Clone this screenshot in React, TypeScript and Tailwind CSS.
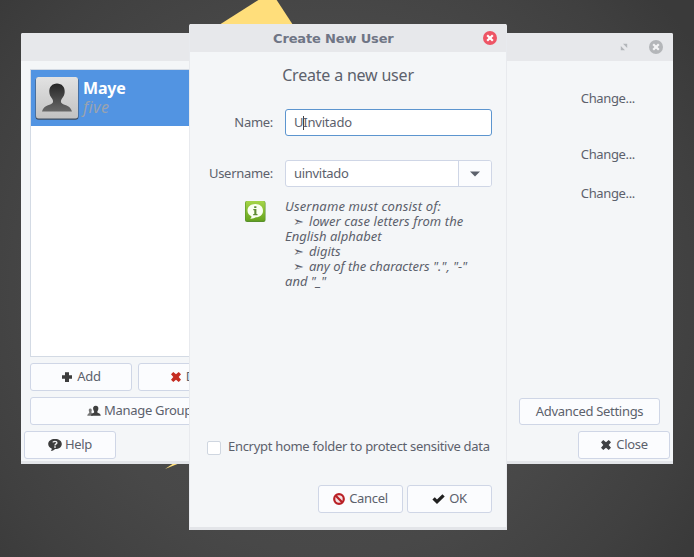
import type { ReactNode } from "react";

const ui = "font-['Noto_Sans','Liberation_Sans',sans-serif]";

function Button({ children, className }: { children: ReactNode; className: string }) {
  return (
    <button
      className={`flex shrink-0 items-center justify-center whitespace-nowrap rounded-[3px] border border-[#cfd6e6] bg-[#fbfcfe] pb-px text-[13px] leading-none tracking-[-0.3px] text-[#5c616c] ${className}`}
    >
      {children}
    </button>
  );
}

function Desktop() {
  return (
    <svg className="absolute inset-0" width="694" height="557" viewBox="0 0 694 557">
      <defs>
        <radialGradient id="desk" gradientUnits="userSpaceOnUse" cx="330" cy="290" r="440">
          <stop offset="0" stopColor="#505050" />
          <stop offset="0.6" stopColor="#484848" />
          <stop offset="0.85" stopColor="#404040" />
          <stop offset="1" stopColor="#3a3a3a" />
        </radialGradient>
      </defs>
      <rect width="694" height="557" fill="url(#desk)" />
      <path d="M219 25 L260 -1 H276 L293 25 Z" fill="#ffde7b" />
      <path d="M165 469 L174 463 H180 Z" fill="#ffe07e" />
    </svg>
  );
}

function CloseDot({ fill, stroke }: { fill: string; stroke: string }) {
  return (
    <svg width="14" height="14" viewBox="0 0 14 14">
      <circle cx="7" cy="7" r="7" fill={fill} />
      <path d="M4.2 4.2 L9.8 9.8 M9.8 4.2 L4.2 9.8" stroke={stroke} strokeWidth="2.2" />
    </svg>
  );
}

function Avatar() {
  return (
    <svg width="44" height="44" viewBox="0 0 44 44" className="shrink-0">
      <defs>
        <linearGradient id="frame" x1="0" y1="0" x2="0" y2="1">
          <stop offset="0" stopColor="#e2e2e2" />
          <stop offset="1" stopColor="#c2c2c2" />
        </linearGradient>
        <linearGradient id="person" x1="0" y1="0" x2="0" y2="1">
          <stop offset="0" stopColor="#262626" />
          <stop offset="1" stopColor="#686868" />
        </linearGradient>
      </defs>
      <rect x="0.5" y="1.5" width="43" height="42.3" rx="3" fill="#3d4b5e" />
      <rect x="1" y="1" width="42" height="41.5" rx="2.5" fill="url(#frame)" />
      <path
        d="M22 7.5 C26.8 7.5 30 11 29.7 16 C29.5 19 28.5 20.6 27 22.5 C25.6 24.5 25.3 26.5 27.4 27.7 C31 29.7 35.5 29.8 37 35.5 H7 C8.5 29.8 13 29.7 16.6 27.7 C18.7 26.5 18.4 24.5 17 22.5 C15.5 20.6 14.5 19 14.3 16 C14 11 17.2 7.5 22 7.5 Z"
        fill="url(#person)"
      />
    </svg>
  );
}

function PlusIcon() {
  return (
    <svg width="12" height="12" viewBox="0 0 12 12">
      <path d="M4 1.2 H8 V4.2 H11 V7.8 H8 V11 H4 V7.8 H1 V4.2 H4 Z" fill="#3d3d3d" />
    </svg>
  );
}

function CrossIcon({ fill }: { fill: string }) {
  return (
    <svg width="12" height="12" viewBox="0 0 12 12">
      <path
        d="M3.3 1 L6 3.2 L8.7 1 L11 3.2 L8.7 6 L11 8.8 L8.7 11 L6 8.8 L3.3 11 L1 8.8 L3.3 6 L1 3.2 Z"
        fill={fill}
      />
    </svg>
  );
}

function GroupIcon() {
  return (
    <svg width="14" height="12" viewBox="0 0 14 12">
      <path d="M3.2 3.4 C4.7 3.4 5.2 5 4.5 6.4 C4 7.5 5 7.9 5.8 8.4 V10.8 H0.3 C0.3 8.6 2.6 8.4 2.2 6.9 C1.3 5.2 1.8 3.4 3.2 3.4 Z" fill="#777" />
      <path d="M8.7 0.8 C10.9 0.8 11.9 2.5 11.2 4.7 C10.8 6 10 6.7 10.4 7.5 C11.3 8.4 13.6 8.2 13.7 10.8 H4 C4.1 8.4 6.3 8.4 7.1 7.5 C7.5 6.7 6.7 6 6.3 4.7 C5.6 2.5 6.6 0.8 8.7 0.8 Z" fill="#3f3f3f" />
    </svg>
  );
}

function HelpIcon() {
  return (
    <svg width="14" height="14" viewBox="0 0 14 14">
      <path d="M7 1 C11 1 13.8 3 13.8 6 C13.8 9 11 11 7.2 11 C6.4 11.8 5 12.8 2.8 13 C3.6 12.2 3.9 11.3 3.7 10.4 C1.6 9.6 0.2 8 0.2 6 C0.2 3 3 1 7 1 Z" fill="#3c3c3c" />
      <path d="M4.9 4.4 C5.1 3.2 8.9 2.8 8.9 4.8 C8.9 6 7 5.9 7 7.4" fill="none" stroke="#eee" strokeWidth="1.4" />
      <rect x="6.2" y="8.3" width="1.6" height="1.5" fill="#eee" />
    </svg>
  );
}

function InfoIcon() {
  return (
    <svg width="21" height="21" viewBox="0 0 21 21" className="ml-px mt-0.5">
      <defs>
        <linearGradient id="info" x1="0" y1="0" x2="0" y2="1">
          <stop offset="0" stopColor="#a5d548" />
          <stop offset="1" stopColor="#67a51e" />
        </linearGradient>
      </defs>
      <rect x="0" y="0" width="20.5" height="21" rx="2" fill="#58902b" />
      <rect x="0.6" y="0" width="19.3" height="19.7" rx="1.5" fill="url(#info)" />
      <path d="M10.3 3 C15 3 18 5.8 18 9.7 C18 13.6 15 16.2 10.8 16.3 C9.6 17.2 7.5 17.9 5.2 17.7 C6.3 17 6.6 16.2 6.4 15.3 C4 14.2 2.5 12.2 2.5 9.7 C2.5 5.8 5.6 3 10.3 3 Z" fill="#fafff2" />
      <path d="M9.2 5.2 h2.2 v1.8 h-2.2 Z M8.3 8.1 H11.4 V13 H12.5 V14.2 H8.2 V13 H9.3 V9.3 H8.3 Z" fill="#5e8b32" />
    </svg>
  );
}

function CancelIcon() {
  return (
    <svg width="12" height="12" viewBox="0 0 12 12">
      <circle cx="6" cy="6" r="4.8" fill="#f6e3e4" stroke="#b92026" strokeWidth="2.2" />
      <path d="M2.8 2.8 L9.2 9.2" stroke="#b92026" strokeWidth="2.3" />
    </svg>
  );
}

function CheckIcon() {
  return (
    <svg width="13" height="12" viewBox="0 0 13 12">
      <path d="M0.4 6.5 L2.8 4.3 L5 6.4 L10.4 1.2 L12.7 3.4 L5 11 Z" fill="#202020" />
    </svg>
  );
}

function UserSettings() {
  return (
    <section className="absolute left-[21px] top-[33px] flex h-[431px] w-[652px] flex-col overflow-hidden rounded-t-[2px] border-b-[3px] border-[#e3e5e9] bg-[#f4f6f8]">
      <header className="flex h-7 shrink-0 items-center justify-end gap-[21px] bg-[#e7e8eb] pr-[10px]">
        <svg width="8" height="8" viewBox="0 0 8 8">
          <path d="M3 0.8 H7.2 V5 Z M0.8 3 V7.2 H5 Z" fill="#b3b6ba" />
        </svg>
        <CloseDot fill="#b4b6b9" stroke="#f4f4f5" />
      </header>
      <div className="flex h-[364px] shrink-0 justify-between pl-[9px] pr-[13px] pt-2">
        <div className="flex w-[225px] flex-col">
          <div className="h-[288px] border border-[#d3dae4] bg-white">
            <div className="flex h-14 items-center bg-[#5294e2] pl-1">
              <Avatar />
              <div className="flex flex-col pl-1 text-base leading-[19px]">
                <b className="tracking-[-0.2px] text-white">Maye</b>
                <i className="tracking-[0.4px] text-[#9aa3af]">five</i>
              </div>
            </div>
          </div>
          <div className="flex gap-[6px] pt-[6px]">
            <Button className="h-7 w-[102px] gap-1">
              <PlusIcon />
              Add
            </Button>
            <Button className="h-7 w-[117px] gap-1">
              <CrossIcon fill="#c52d22" />
              Delete
            </Button>
          </div>
          <Button className="mt-[6px] h-7 w-[225px] gap-[3px]">
            <GroupIcon />
            Manage Groups
          </Button>
        </div>
        <div className="flex w-[141px] flex-col items-end text-[13px] leading-5 tracking-[-0.35px] text-[#5c616c]">
          <span className="mr-[25px] mt-[19px]">Change...</span>
          <span className="mr-[25px] mt-9">Change...</span>
          <span className="mr-[25px] mt-[19px]">Change...</span>
          <Button className="mt-auto h-[27px] w-[141px]">Advanced Settings</Button>
        </div>
      </div>
      <footer className="flex justify-between px-[3px] pt-[6px]">
        <Button className="h-7 w-[92px] gap-[3px]">
          <HelpIcon />
          Help
        </Button>
        <Button className="h-7 w-[92px] gap-1">
          <CrossIcon fill="#3f4144" />
          Close
        </Button>
      </footer>
    </section>
  );
}

function Bullet() {
  return <span className="ml-2 inline-block w-4 font-['DejaVu_Sans',sans-serif] not-italic leading-none">➣</span>;
}

function CreateUser() {
  return (
    <section className="absolute left-[189px] top-[24px] flex h-[506px] w-[318px] flex-col rounded-t-[2px] border-b-[3px] border-x border-b-[#e3e5e9] border-x-[#e8eaee] bg-[#f4f6f8] text-[13px] tracking-[-0.3px] text-[#5c616c]">
      <header className="flex h-7 shrink-0 items-center justify-between bg-[#e7e8eb] pl-[83px] pr-[9px]">
        <h1 className="whitespace-nowrap font-['DejaVu_Sans',sans-serif] text-[13px] font-bold leading-none tracking-[-0.15px] text-[#6f7585]">
          Create New User
        </h1>
        <CloseDot fill="#ee5565" stroke="#fff" />
      </header>
      <h2 className="mt-3 text-center text-base leading-[22px] tracking-[-0.2px]">Create a new user</h2>
      <div className="mt-[23px] flex items-center pl-[10px]">
        <label className="w-[73px] text-right">Name:</label>
        <div className="ml-3 flex h-[27px] w-[207px] items-center rounded-[3px] border border-[#5c95cf] bg-white pl-2">
          <span>U</span>
          <span className="-mr-px h-[14px] w-px bg-[#444]" />
          <span className="tracking-[-0.2px]">Invitado</span>
        </div>
      </div>
      <div className="mt-6 flex items-center pl-[10px]">
        <label className="w-[73px] text-right">Username:</label>
        <div className="ml-3 flex h-[27px] w-[207px] items-center rounded-[3px] border border-[#cfd6e6] bg-white pl-2">
          <span className="grow">uinvitado</span>
          <span className="flex h-full w-[33px] items-center justify-center rounded-r-[2px] border-l border-[#cfd6e6] bg-[#fbfcfe]">
            <svg width="10" height="6" viewBox="0 0 10 6">
              <path d="M0 0.5 H10 L5 5.5 Z" fill="#5c616c" />
            </svg>
          </span>
        </div>
      </div>
      <div className="mt-3 flex items-start pl-[54px]">
        <InfoIcon />
        <p className="ml-[19px] whitespace-nowrap text-[13px] italic leading-[15px] tracking-normal">
          <span className="tracking-[0.15px]">Username must consist of:</span>
          <br />
          <Bullet />
          <span className="tracking-[0.08px]">lower case letters from the</span>
          <br />
          English alphabet
          <br />
          <Bullet />
          digits
          <br />
          <Bullet />
          <span className="tracking-[-0.04px]">any of the characters ".", "-"</span>
          <br />
          and "_"
        </p>
      </div>
      <label className="mt-auto flex items-center whitespace-nowrap pl-[17px]">
        <span className="mr-[7px] mt-0.5 h-[14px] w-[14px] rounded-[2px] border border-[#cfd6e0] bg-white" />
        <span className="mb-px">Encrypt home folder to protect sensitive data</span>
      </label>
      <div className="mb-[14px] mt-7 flex justify-end gap-1 pr-[14px]">
        <Button className="h-7 w-[85px] gap-1">
          <CancelIcon />
          Cancel
        </Button>
        <Button className="h-7 w-[85px] gap-1">
          <CheckIcon />
          OK
        </Button>
      </div>
    </section>
  );
}

export default function App() {
  return (
    <main className={`relative h-[557px] w-[694px] overflow-hidden ${ui}`}>
      <Desktop />
      <UserSettings />
      <CreateUser />
    </main>
  );
}
